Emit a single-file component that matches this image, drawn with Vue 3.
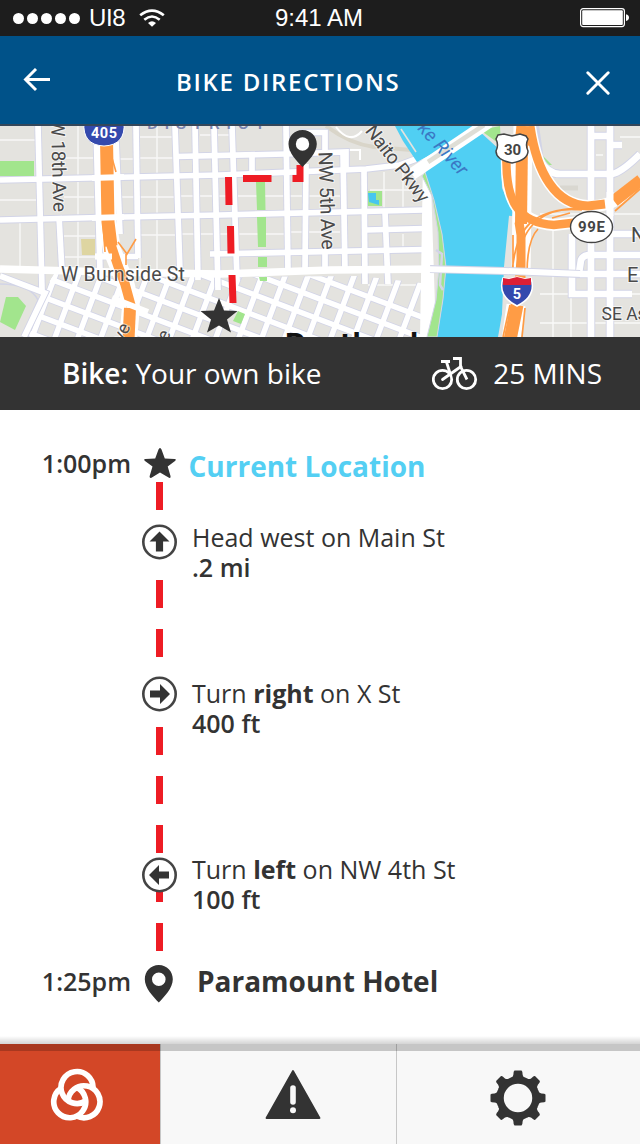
<script setup>
const steps = [
  { key: 'west', turn: 0, lead: 'Head west on Main St', strong: '', tail: '', distance: '.2 mi' },
  { key: 'right', turn: 90, lead: 'Turn ', strong: 'right', tail: ' on X St', distance: '400 ft' },
  { key: 'left', turn: -90, lead: 'Turn ', strong: 'left', tail: ' on NW 4th St', distance: '100 ft' },
]

const majorRoads = [
  'M0 180L110 177.500L220 175L366 169L400 165L432 153',
  'M0 220L100 217.500L220 215L424 210',
  'M95 256.500H138M210 254L424 249.500',
  'M176 156.500L286 154L346 152V170',
  'M300 132.500H325V153',
  'M366 230L424 228.500',
  'M38 126L42 290',
  'M59 216L62 272',
  'M96 126L100 272',
  'M116 140L120 234',
  'M136 126L138 258',
  'M175 126L180 272',
  'M195 126L198 280',
  'M214 126L218 290',
  'M232 126L237 280',
  'M252 156L252 173',
  'M286 126L288 272',
  'M306 164L305 272',
  'M325 250V272',
  'M343 152L345 272',
  'M364 170L365 284',
  'M385 212L388 284',
]

const minorRoads = [
  'M0 140H38M42 200H0M64 197H96M64 158H98M20 218V270M78 126V272',
  'M120 159H134M120 197H134M140 137H174M140 158H174M140 197H174M157 126V270M140 235H180M140 258V272',
  'M180 196H286M180 234H286M200 135H230M290 196H340M290 232H340',
  'M370 190H420M384 172V208M403 172V208M403 234V247M368 285H430',
  'M64 236H96M64 257H96',
]

const gentle = Array.from({ length: 12 }, (_, i) => `M0 ${157 + i * 20.6}L440 ${324 + i * 20.6}`)
const steep = Array.from({ length: 20 }, (_, i) => `M${38 + i * 23} 260L${8 + i * 23} 340`)

const eastRoads = [
  'M591 126V337', 'M610 126V337',
  'M540 160Q548 174 560 174H612Q622 172 640 154',
  'M591 136H612M612 145H622',
  'M572 234V294H632M612 234H640',
  'M579 273L581 260Q583 255 590 255H640',
  'M572 274H640',
]
const teeth = [0, 45, 90, 135, 180, 225, 270, 315]
</script>

<template>
  <main class="screen">
    <header class="status">
      <div class="carrier">
        <span class="dots"><i v-for="n in 5" :key="n"></i></span>
        <span class="status-text">UI8</span>
        <svg class="wifi" width="26" height="18" viewBox="0 0 26 18" fill="none" stroke="#fff">
          <path d="M1.200 6.300Q13 -3.200 24.800 6.300" stroke-width="2.700" />
          <path d="M5.300 10.700Q13 4.300 20.700 10.700" stroke-width="2.600" />
          <path d="M9 14Q13 10.300 17 14L13 17.800Z" fill="#fff" stroke="none" />
        </svg>
      </div>
      <span class="status-text clock">9:41 AM</span>
      <svg class="battery" width="50" height="20" viewBox="0 0 50 20">
        <rect x=".6" y=".6" width="43.800" height="18" rx="2.500" fill="none" stroke="#fff" stroke-width="1.200" />
        <rect x="2.200" y="2.200" width="40.600" height="14.800" rx="1" fill="#fff" />
        <path d="M46 6.200Q49 7 49 9.600Q49 12.200 46 13Z" fill="#fff" />
      </svg>
    </header>

    <nav class="titlebar">
      <svg width="28" height="24" viewBox="0 .5 28 24" fill="none" stroke="#fff" stroke-width="2.900">
        <path d="M27 12H2.500M13 1.500L2.500 12L13 22.500" />
      </svg>
      <h1>BIKE DIRECTIONS</h1>
      <svg class="close" width="24" height="24" viewBox="0 0 24 24" stroke="#fff" stroke-width="2.900" stroke-linecap="round">
        <path d="M1.800 1.800L22.200 22.200M22.200 1.800L1.800 22.200" />
      </svg>
    </nav>

    <svg class="map" width="640" height="211" viewBox="0 126 640 211">
      <defs>
        <clipPath id="southwest"><path d="M42 294L54 274L200 277L360 276L430 284V337H25Z" /></clipPath>
      </defs>
      <rect y="126" width="640" height="211" fill="#e4e3df" />

      <g fill="none" stroke="#fff" stroke-width="1.400" opacity=".75">
        <path v-for="d in minorRoads" :key="d" :d="d" />
      </g>
      <path d="M326 126Q350 144 374 147L424 151" fill="none" stroke="#d9d5c9" stroke-width="4" />
      <path d="M336 127Q350 145 362 131M345 150H360V160" fill="none" stroke="#fff" stroke-width="2" />

      <g clip-path="url(#southwest)" fill="none">
        <g stroke="#d2d4e7" stroke-width="7">
          <path v-for="d in gentle" :key="d" :d="d" />
          <path v-for="d in steep" :key="d" :d="d" />
        </g>
        <g stroke="#fff" stroke-width="5.400">
          <path v-for="d in gentle" :key="d" :d="d" />
          <path v-for="d in steep" :key="d" :d="d" />
        </g>
      </g>
      <path d="M0 284Q30 284 38 300L22 337" fill="none" stroke="#d2d4e7" stroke-width="1.500" />
      <g fill="none" stroke="#d2d4e7" stroke-width="7.500">
        <path v-for="d in majorRoads" :key="d" :d="d" />
        <path d="M0 276L45 293L24 337" />
      </g>
      <g fill="none" stroke="#fff" stroke-width="5.700">
        <path v-for="d in majorRoads" :key="d" :d="d" />
        <path d="M0 276L45 293L24 337" />
        <path d="M0 269L110 272L220 274L330 270L440 269" stroke-width="7.500" />
      </g>

      <g fill="#a2e58d">
        <path d="M0 161H34V176H0Z" />
        <path d="M6 297L18 297L26 306L15 330L0 322Z" />
        <path d="M256 182H265L265.500 210H257ZM257 217H266V247H258ZM258 257H267V267H258ZM259 277H267V281H260Z" />
        <path d="M238 311L245 314L241 324L233 321Z" />
        <path d="M368 191H382V206H368Z" />
      </g>
      <path d="M368 193H376V200H379V205L369 202Z" fill="#47c6ef" />
      <path d="M81 239H95V255H82Z" fill="#ded5a1" />

      <g fill="none" stroke="#ff9c45">
        <path d="M106 140L107.500 222L112 250L125 282L131 307L128 340" stroke="#fff" stroke-width="18" />
        <path d="M106.500 140L108 222L111 246" stroke-width="13" />
        <path d="M110 242L118 266L125 284L131 306" stroke-width="9.500" />
        <path d="M130 308L128.500 340" stroke-width="12" />
        <path d="M103 225L105 252M112 158L116 172M118 242L127 254L136 239M126 265V254" stroke-width="1.600" />
      </g>
      <g fill="none" stroke="#fff" stroke-width="6">
        <path d="M92 178L124 177M92 218L124 217M95 256.500H112M112 298L148 312" />
      </g>

      <path d="M423 160L430 152L436 337H420Z" fill="#fff" />
      <path d="M395 126L403 141L417 162L484 126Z" fill="#50cff3" />
      <path d="M424 171L433 198L442 234L446 267L443 299L437 337H498L504 303L505 267L508 236L513 212L502 188L501 151L478 130Z" fill="#50cff3" />
      <path d="M422 176L432 196L438 232L439 268L436 300L427 337H437L443 299L446 267L442 234L434 200L425 172Z" fill="#a2e58d" stroke="#d2d4e7" stroke-width="1" />
      <path d="M436 250L442 254L440 285L443 290" fill="none" stroke="#d2d4e7" stroke-width="2.500" />
      <path d="M480 130L501 145L500 126" fill="#a2e58d" />
      <path d="M401 129L416 152" stroke="#e4e3df" stroke-width="1.600" />
      <path d="M412 174L489 122" stroke="#fff" stroke-width="12" />
      <path d="M428 162L484 125" stroke="#dfded6" stroke-width="4.500" />
      <path d="M511 216L506 267L503 337" fill="none" stroke="#e4e3df" stroke-width="4" />
      <path d="M543 156L552 165H544Z" fill="#a2e58d" />
      <path d="M560 188H578" stroke="#d9d7d0" stroke-width="5" />
      <path d="M553 220V337M571 294V337M540 294H640M540 323H640M596 155H603M540 214H640M620 137H640" fill="none" stroke="#fff" stroke-width="1.400" opacity=".8" />

      <g fill="none">
        <path d="M535 126L540 160Q546 174 560 174H612Q622 172 640 154" stroke="#d2d4e7" stroke-width="8" />
        <g stroke="#d2d4e7" stroke-width="8.500"><path v-for="d in eastRoads" :key="d" :d="d" /></g>
        <g stroke="#fff" stroke-width="6.700"><path v-for="d in eastRoads" :key="d" :d="d" /></g>
        <g stroke="#fff">
          <path d="M523 126L521 275M516 305L511 340" stroke-width="19" />
          <path d="M507 155C505 201 518 222 554 225L580 222M530 126C537 174 556 205 588 206Q604 207 618 199L640 181" stroke-width="12" />
        </g>
        <g stroke="#ff9c45">
          <path d="M525 126L523 145" stroke-width="17" />
          <path d="M522 142L521 224" stroke-width="12" />
          <path d="M519 222L521 235V278" stroke-width="9" />
          <path d="M517 305L510 340" stroke-width="13" />
          <path d="M506.500 155C505 201 518 223 554 225L580 222" stroke-width="8.500" />
          <path d="M530 126C537 174 556 205 588 206L605 204" stroke-width="9" />
          <path d="M614 201L641 180" stroke-width="12" />
          <path d="M512 275C515 223 536 210 579 208M516 277C518 220 548 206 582 210M527 274Q527 240 538 229M552 218L570 213M513 275V235M615 211L640 189M525 308L522 337M503 337L510 305" stroke-width="1.700" />
        </g>
        <path d="M610 192V216" stroke="#fff" stroke-width="7" />
        <path d="M430 269L505 271L580 274" stroke="#d2d4e7" stroke-width="8" />
        <path d="M420 269L505 271L582 274" stroke="#fff" stroke-width="6" />
      </g>

      <g class="label">
        <text transform="translate(51 120) rotate(88.500)" font-size="19" textLength="92">W 18th Ave</text>
        <text transform="translate(318.500 152) rotate(88)" font-size="19.500" textLength="98">NW 5th Ave</text>
        <text x="61" y="280.500" font-size="19.500" textLength="124">W Burnside St</text>
        <text transform="translate(364.500 131) rotate(52.500)" font-size="19" textLength="92">Naito Pkwy</text>
        <text transform="translate(123 343) rotate(-65)" font-size="18">ve</text>
        <text transform="translate(167 342) rotate(-65)" font-size="18">e</text>
        <text x="631" y="242" font-size="20">N</text>
        <text x="627" y="281.500" font-size="20">E</text>
        <text x="601.500" y="319.500" font-size="17.500">SE As</text>
      </g>
      <text class="river" transform="translate(417 129) rotate(48)" font-size="19" textLength="64">ke River</text>
      <text class="district" x="147" y="129" font-size="17" textLength="118">DISTRICT</text>
      <text class="city" x="285" y="355" font-size="31" textLength="133">Portland</text>

      <path d="M84 122H124Q126 145 104 146Q82 145 84 122Z" fill="#3449ad" stroke="#fff" stroke-width="1" />
      <text class="shield" x="104" y="138" font-size="14.500" textLength="26">405</text>
      <path d="M498 135L504 134L512 136L520 134L526 136L528 139Q525 145 528 151Q528 160 512 163Q496 160 496 151Q499 145 496 139Z" fill="#fff" stroke="#444" stroke-width="1.500" />
      <text class="shield dark" x="512.500" y="154.800" font-size="15">30</text>
      <ellipse cx="591.500" cy="227" rx="21" ry="15.500" fill="#fff" stroke="#444" stroke-width="1.400" />
      <text class="shield dark" x="591.500" y="232.300" font-size="15" textLength="27">99E</text>
      <path d="M503 278L509 279L517 277L525 279L531 278Q537 296 517 306Q497 296 503 278Z" fill="#3449ad" stroke="#fff" stroke-width="1.500" />
      <path d="M503 278L509 279L517 277L525 279L531 278V285H503Z" fill="#dc1f35" />
      <text class="shield" x="517" y="298.500" font-size="14.500">5</text>

      <g fill="none" stroke="#ee1c24" stroke-width="7">
        <path d="M228.500 177L229 205M230.500 226L231 253.500M232 275L233 303" />
        <path d="M243 178.500H271.500M292.500 178.500H303.500M300 182V165" />
      </g>
      <path d="M302.500 130C294 130 288.500 136.500 288.500 144C288.500 153 297 161 302.500 167C308 161 316.800 153 316.800 144C316.800 136.500 311 130 302.500 130Z" fill="#333" />
      <circle cx="302.500" cy="144" r="6.700" fill="#fff" />
      <path d="M219 298L224 310.500L237.500 311L227 319.500L231 332.500L219 325.500L207 332.500L211 319.500L200.500 311L214 310.500Z" fill="#333" />
    </svg>

    <section class="summary">
      <p><b>Bike:</b> Your own bike</p>
      <svg width="46" height="34" viewBox="432 357 46 34" fill="none" stroke="#fff" stroke-width="2.800">
        <circle cx="442.500" cy="379.500" r="9.200" />
        <circle cx="466.500" cy="379.500" r="9.200" />
        <path d="M442.500 379.500L461 366.500M446.500 362L450.300 374" stroke-linecap="round" />
        <path d="M441 361.500H450M453 358.500H460.500V366.500L467 379.500" />
      </svg>
      <span>25 MINS</span>
    </section>

    <section class="route">
      <div class="row start">
        <time>1:00pm</time>
        <svg class="star" width="32" height="31" viewBox="0 0 32 31">
          <path d="M16 0Q17 0 17.500 1.500L20.800 10.600L30.500 11Q33 11.500 31 13L23.700 18.500L26.500 28Q26.800 30.500 25 29.800L16 24.500L7.500 29.800Q5.200 30.500 5.700 28L8.500 18.500L1 13Q-1 11.500 1.500 11L11.200 10.600L14.500 1.500Q15 0 16 0Z" fill="#333" />
        </svg>
        <h2>Current Location</h2>
      </div>

      <div v-for="s in steps" :key="s.key" class="row step" :class="s.key">
        <svg class="turn" width="36" height="36" viewBox="-18.500 -18 36 36">
          <circle r="16.200" fill="#fff" stroke="#444" stroke-width="2.600" />
          <path :transform="`rotate(${s.turn})`" d="M0 -10.500L10 -.5H3.600V9.500H-3.600V-.5H-10Z" fill="#333" />
        </svg>
        <div class="instruction">
          <p>{{ s.lead }}<b v-if="s.strong">{{ s.strong }}</b>{{ s.tail }}</p>
          <p class="distance">{{ s.distance }}</p>
        </div>
      </div>

      <div class="row finish">
        <time>1:25pm</time>
        <svg class="pin" width="30" height="38" viewBox="-.5 0 30 38">
          <path d="M14.300 0C6 0 .3 6.500 .3 14.200C.3 23 8.500 31.500 14.300 37.500C20 31.500 28.300 23 28.300 14.200C28.300 6.500 22.500 0 14.300 0ZM14.300 7.500A6.800 6.800 0 1 1 14.300 21.100A6.800 6.800 0 1 1 14.300 7.500Z" fill="#333" fill-rule="evenodd" />
        </svg>
        <h2>Paramount Hotel</h2>
      </div>
    </section>

    <footer class="tabs">
      <div class="tab active">
        <svg width="54" height="53" viewBox="149 113 162 159" fill="none" stroke="#fff" stroke-width="17">
          <path d="M278 174A48 48 0 1 0 256 212" />
          <path d="M182 174A48 48 0 1 0 229 171" />
          <path d="M229 257A48 48 0 1 0 203 212" />
        </svg>
      </div>
      <div class="tab warn">
        <svg width="56" height="50" viewBox="0 0 56 50">
          <path d="M28 1L54.500 48H1.500Z" fill="#333" stroke="#333" stroke-width="1.800" stroke-linejoin="round" />
          <path d="M28 18V32" stroke="#f8f8f8" stroke-width="5.600" stroke-linecap="round" />
          <circle cx="28" cy="40.200" r="3" fill="#f8f8f8" />
        </svg>
      </div>
      <div class="tab gear">
        <svg width="56" height="56" viewBox="-28 -28 56 56">
          <circle r="17.900" fill="none" stroke="#333" stroke-width="7.300" />
          <path v-for="a in teeth" :key="a" :transform="`rotate(${a})`" d="M-3.500 -27.500H3.500Q4.600 -27 4.600 -23.500Q5 -20.500 8 -20H-8Q-5 -20.500 -4.600 -23.500Q-4.600 -27 -3.500 -27.500Z" fill="#333" />
        </svg>
      </div>
    </footer>
  </main>
</template>

<style>
body { margin: 0; background: #fff; }
</style>

<style scoped>
.screen { width: 640px; height: 1144px; display: flex; flex-direction: column; overflow: hidden; background: #fff; color: #333; font-family: "Open Sans", "Noto Sans", sans-serif; }
svg { display: block; flex: none; }
p, h1, h2 { margin: 0; }

.status { height: 36px; flex: none; box-sizing: border-box; display: grid; grid-template-columns: 275px 1fr auto; align-items: center; padding-right: 11px; background: #1d1d1d; color: #fff; }
.status-text { font: 24px/34px "Liberation Sans", Arial, sans-serif; white-space: nowrap; letter-spacing: -.4px; }
.clock { letter-spacing: 0; }
.carrier { display: flex; align-items: center; padding-left: 13px; }
.dots { display: flex; gap: 3px; margin-right: 9px; }
.dots i { width: 11px; height: 11px; border-radius: 50%; background: #fff; }
.wifi { margin-left: 14px; }
.battery { margin: 0 -1px 0 0; }

.titlebar { height: 90px; flex: none; box-sizing: border-box; display: flex; align-items: center; padding: 0 30px 0 23px; border-bottom: 2px solid #34475a; background: #005289; color: #fff; }
.titlebar h1 { margin: 4px auto 0 125px; font-size: 24px; font-weight: 600; line-height: 34px; letter-spacing: 1.720px; white-space: nowrap; }
.close { margin-top: 5px; }

.label text { fill: #4a4a4a; font-family: Roboto, sans-serif; stroke: #fff; stroke-width: 2px; stroke-opacity: .6; paint-order: stroke; }
.river { fill: #3b78c4; font-family: Roboto, sans-serif; font-style: italic; }
.district { fill: #7b86b2; font-family: Roboto, sans-serif; font-weight: 500; }
.city { fill: #111; font-family: Roboto, sans-serif; font-weight: 700; }
.shield { fill: #fff; font-family: Roboto, sans-serif; font-weight: 700; text-anchor: middle; }
.shield.dark { fill: #444; }
.map { overflow: hidden; }

.summary { height: 73px; flex: none; box-sizing: border-box; display: flex; align-items: center; padding: 0 38px 1px 62px; background: #333; color: #fff; font-size: 28px; white-space: nowrap; }
.summary p { margin-right: auto; }
.summary b { font-weight: 600; }
.summary svg { margin: 1px 15px 0 0; }

.route { flex: 1; display: grid; grid-template-rows: 82px 156px 176px 106px 84px; padding-top: 30px; background: repeating-linear-gradient(#ee1c24 0 28px, transparent 28px 49px) 156px 72px / 7px 469px no-repeat; }
.row { display: grid; grid-template-columns: 131px 1fr; align-content: start; white-space: nowrap; }
.row.start, .row.finish { grid-template-columns: 131px auto 1fr; }
time { font-size: 25px; font-weight: 600; line-height: 34px; text-align: right; }
h2 { font-size: 28px; font-weight: 700; line-height: 36px; }
.start time { margin-top: 6px; }
.start h2 { margin: 8px 0 0 13px; color: #54cff3; }
.star { margin: 8px 0 0 12.500px; }
.step { grid-template-columns: auto 1fr; font-size: 25px; line-height: 30px; }
.turn { margin: 2px 15px 0 141px; }
.right .turn { margin-top: -2px; }
.left .turn { margin-top: 2.500px; }
.instruction b { font-weight: 700; }
.distance { font-weight: 600; }
.finish time { margin-top: 4px; }
.finish h2 { margin: 3px 0 0 23px; }
.pin { margin: 4.500px 0 0 13px; }

.tabs { height: 100px; flex: none; position: relative; display: grid; grid-template-columns: 160px 237px 1fr; background: #f8f8f8; }
.tabs::before { content: ""; position: absolute; inset: -8px 0 auto; height: 8px; background: linear-gradient(transparent, rgba(0, 0, 0, .17)); }
.tabs::after { content: ""; position: absolute; inset: 0 0 auto; height: 7px; background: rgba(0, 0, 0, .2); }
.tab { display: flex; align-items: center; justify-content: center; padding-top: 8px; box-sizing: border-box; }
.active { background: #d34727; padding: 1px 7px 0 0; }
.warn { border: solid #c7c7c7; border-width: 0 1px; padding: 1px 0 0 29px; }
.gear { padding-right: 1px; }
</style>
